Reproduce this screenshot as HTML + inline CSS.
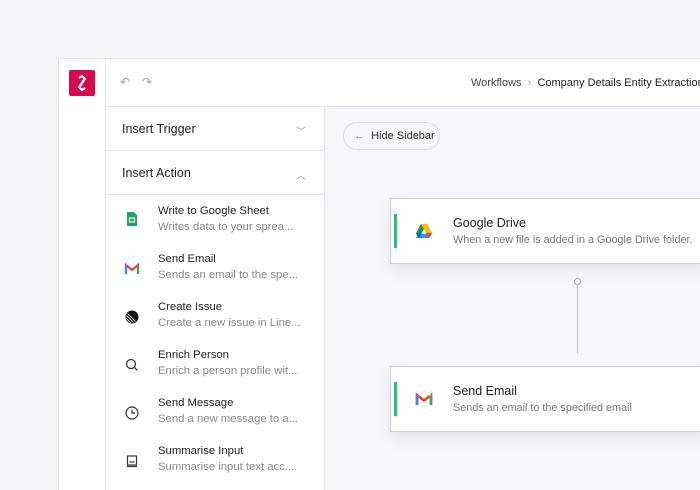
<!DOCTYPE html>
<html><head><style>
*{box-sizing:border-box;margin:0;padding:0}
html,body{width:700px;height:490px;overflow:hidden}
body{background:#f4f4f9;font-family:"Liberation Sans",sans-serif;position:relative}
.main{position:absolute;left:58px;top:58px;width:642px;height:432px;background:#fff;border:1px solid #e3e3ee;border-bottom:none;border-right:none;overflow:hidden}
.rail{position:absolute;left:0;top:0;width:47px;height:432px;border-right:1px solid #e3e3ee}
.logo{position:absolute;left:10px;top:11px;width:26px;height:26px;background:#d6094f;border-radius:2px}
.top{position:absolute;left:47px;top:0;right:0;height:48px;border-bottom:1px solid #e3e3ee}
.side{position:absolute;left:47px;top:48px;width:219px;height:384px;border-right:1px solid #e3e3ee}
.sec{height:44px;border-bottom:1px solid #e3e3ee;position:relative;font-size:12.5px;color:#222;padding:15px 0 0 16px}
.chev{position:absolute;right:18px;top:16px;color:#999;font-size:10px}
.item{position:absolute;left:0;height:48px}
.item .t{position:absolute;left:52px;top:0;font-size:11.3px;color:#222;white-space:nowrap}
.item .d{position:absolute;left:52px;top:16px;font-size:11.3px;color:#888;white-space:nowrap}
.item .ic{position:absolute;left:18px;top:6px;width:16px;height:16px}
.canvas{position:absolute;left:266px;top:48px;right:0;bottom:0;background:#f7f7fb}
.btn{position:absolute;left:18px;top:15px;width:97px;height:28px;border:1px solid #dcdce6;border-radius:14px;background:#f7f7fb;font-size:11px;color:#333;padding:7px 0 0 10px}
.card{position:absolute;left:65px;width:320px;height:66px;background:#fff;border:1px solid #ccd2e3;box-shadow:0 6px 14px rgba(80,80,120,.1)}
.card .bar{position:absolute;left:3px;top:15px;width:3px;height:34px;background:#2fbf71}
.card .t{position:absolute;left:62px;top:17px;font-size:12.5px;color:#222;white-space:nowrap}
.card .d{position:absolute;left:62px;top:35px;font-size:10.8px;color:#777;white-space:nowrap}
</style></head><body>
<div class="main">
 <div class="rail"><div class="logo"><svg width="26" height="26" viewBox="0 0 26 26"><path d="M10 8l3-2 3 3-3 3M16 18l-3 2-3-3 3-3M11 15l4-4" stroke="#fff" stroke-width="2" fill="none"/></svg></div></div>
 <div class="top">
  <span style="position:absolute;left:14px;top:16px;color:#9aa;font-size:12px">↶</span>
  <span style="position:absolute;left:36px;top:16px;color:#9aa;font-size:12px">↷</span>
  <span style="position:absolute;left:365px;top:18px;font-size:11px;color:#444;white-space:nowrap">Workflows &nbsp;<span style="color:#999">›</span>&nbsp; <span style="color:#222">Company Details Entity Extraction</span></span>
 </div>
 <div class="side">
  <div class="sec">Insert Trigger<span class="chev">﹀</span></div>
  <div class="sec">Insert Action<span class="chev">︿</span></div>
  <div class="item" style="top:98px"><svg class="ic" viewBox="0 0 16 16"><path d="M3 1h7l3 3v11H3z" fill="#1ea362"/><rect x="5.5" y="7" width="5" height="4" fill="none" stroke="#fff" stroke-width="1.2"/></svg><div class="t">Write to Google Sheet</div><div class="d">Writes data to your sprea...</div></div>
  <div class="item" style="top:146px"><svg class="ic" viewBox="0 0 16 16" style="top:8px"><path d="M2 13V4l6 5 6-5v9" fill="none" stroke="#ea4335" stroke-width="2.2"/><path d="M2 4v9" stroke="#4285f4" stroke-width="2.2"/><path d="M14 4v9" stroke="#34a853" stroke-width="2.2"/></svg><div class="t">Send Email</div><div class="d">Sends an email to the spe...</div></div>
  <div class="item" style="top:194px"><svg class="ic" viewBox="0 0 16 16" style="top:8px"><circle cx="8" cy="8" r="6.5" fill="#111"/><path d="M2 9l5 5M2.5 6.5l7 7M3.5 4.5l8 8" stroke="#fff" stroke-width=".8"/></svg><div class="t">Create Issue</div><div class="d">Create a new issue in Line...</div></div>
  <div class="item" style="top:242px"><svg class="ic" viewBox="0 0 16 16" style="top:8px"><circle cx="7" cy="7" r="4.5" fill="none" stroke="#333" stroke-width="1.3"/><path d="M10.3 10.3l3 3" stroke="#333" stroke-width="1.3"/></svg><div class="t">Enrich Person</div><div class="d">Enrich a person profile wit...</div></div>
  <div class="item" style="top:290px"><svg class="ic" viewBox="0 0 16 16" style="top:8px"><circle cx="8" cy="8" r="6" fill="none" stroke="#333" stroke-width="1.2"/><path d="M8 4.5V8h3" fill="none" stroke="#333" stroke-width="1.2"/></svg><div class="t">Send Message</div><div class="d">Send a new message to a...</div></div>
  <div class="item" style="top:338px"><svg class="ic" viewBox="0 0 16 16" style="top:8px"><rect x="3.5" y="3" width="9" height="9" fill="none" stroke="#333" stroke-width="1.2"/><path d="M3 13.5h10M5.5 9h5" stroke="#333" stroke-width="1.2"/></svg><div class="t">Summarise Input</div><div class="d">Summarise input text acc...</div></div>
 </div>
 <div class="canvas">
  <div class="btn"><span style="color:#777">←</span>&nbsp; Hide Sidebar</div>
  <div class="card" style="top:91px"><div class="bar"></div>
   <svg style="position:absolute;left:24px;top:24px" width="18" height="16" viewBox="0 0 18 16"><path d="M6 1h6l-6 10-3 0z" fill="#0f9d58"/><path d="M6 1h6l5 9h-6z" fill="#fbbc04"/><path d="M3 11h14l-3 4H1z" fill="#4285f4"/><path d="M6 1L1 10l2 5 5-9z" fill="#0f9d58"/><path d="M17 10h-6l-3 5h6z" fill="#4285f4"/><path d="M12 1l5 9-3 0-5-9z" fill="#fbbc04"/><path d="M1 10h6l-3 5z" fill="#0066da"/><path d="M17 10l-3 5-2-5z" fill="#ea4335"/></svg>
   <div class="t">Google Drive</div><div class="d">When a new file is added in a Google Drive folder.</div></div>
  <div style="position:absolute;left:249px;top:171px;width:7px;height:7px;border:1px solid #aab;border-radius:50%"></div>
  <div style="position:absolute;left:252px;top:178px;width:1px;height:68px;background:#bbc"></div>
  <div class="card" style="top:259px"><div class="bar"></div>
   <svg style="position:absolute;left:24px;top:25px" width="18" height="14" viewBox="0 0 18 14"><path d="M2 13V3l7 5.5L16 3v10" fill="none" stroke="#ea4335" stroke-width="2.6"/><path d="M2 3v10" stroke="#4285f4" stroke-width="2.6"/><path d="M16 3v10" stroke="#34a853" stroke-width="2.6"/><path d="M14.7 2.5l1.3 1" stroke="#fbbc04" stroke-width="2.6"/></svg>
   <div class="t">Send Email</div><div class="d">Sends an email to the specified email</div></div>
 </div>
</div>
</body></html>
